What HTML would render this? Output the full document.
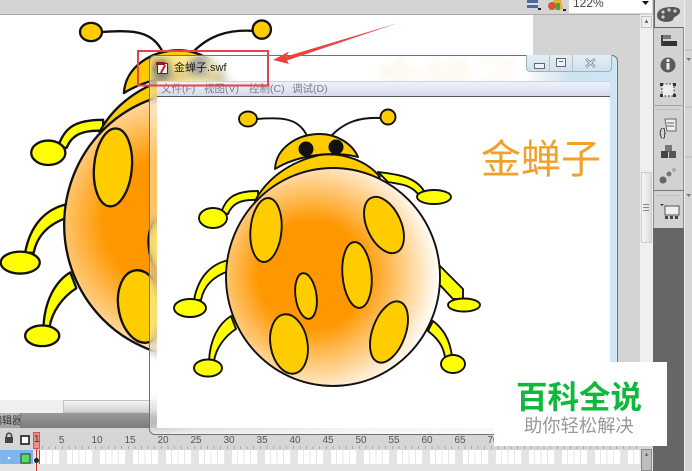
<!DOCTYPE html>
<html><head><meta charset="utf-8">
<style>
html,body{margin:0;padding:0;width:692px;height:471px;overflow:hidden;background:#d4d4d4;font-family:"Liberation Sans","Noto Sans CJK SC",sans-serif}
.a{position:absolute}
#stage{left:0;top:15px;width:533px;height:385px;background:#fff;overflow:hidden}
#win{left:149px;top:55px;width:467px;height:378px;border:1px solid #66757c;border-radius:6px;-webkit-backdrop-filter:blur(4px);backdrop-filter:blur(4px);background:linear-gradient(90deg,rgba(255,255,255,.4) 0,rgba(255,255,255,.62) 10%,rgba(255,255,255,.82) 40%,rgba(255,255,255,.9) 70%,rgba(255,255,255,.9) 80%,rgba(205,230,245,.8) 90%,rgba(205,230,245,.95) 100%);box-shadow:0 0 1px #fff inset}
#menu{left:157px;top:81px;width:453px;height:16px;background:linear-gradient(#f0f1fa,#d3d8eb);border-top:1px solid #c8d4e0;box-sizing:border-box}
#menu:after{content:"";position:absolute;left:0;right:0;bottom:0;height:1px;background:#555}
#menu span{position:absolute;top:0;font-size:10.5px;color:#7d7d85;line-height:14px;white-space:nowrap}
#client{left:157px;top:97px;width:453px;height:331px;background:#fff}
#btns{left:526px;top:55px;width:84px;height:16px;border:1px solid #9db2bf;border-top:0;border-radius:0 0 4px 4px;background:linear-gradient(#e4eef5,#cfe1ec);box-sizing:content-box}
.n{position:absolute;top:435px;font-size:10px;line-height:12px;color:#555;transform:translateX(-50%)}
.soft{filter:blur(.35px)}
</style></head>
<body>
<svg width="0" height="0" style="position:absolute">
<defs>
<radialGradient id="g" gradientUnits="userSpaceOnUse" cx="312" cy="275" r="128">
<stop offset="0" stop-color="#ff9800"/><stop offset=".42" stop-color="#ff9800"/><stop offset="1" stop-color="#fff"/>
</radialGradient>
<g id="bug" stroke="#111" stroke-width="1.9" stroke-linejoin="round">
<g fill="none">
<path d="M257 119C282 117 299 118 307 136"/>
<path d="M380 118C360 117 345 122 332 135"/>
</g>
<ellipse cx="248" cy="119" rx="9" ry="7.5" fill="#ffcc00"/>
<circle cx="388" cy="117" r="7.5" fill="#ffcc00"/>
<g fill="#ffff00">
<path d="M221 213C226 198 234 191 258 191L258 200C240 199 232 204 228 214Z"/>
<ellipse cx="213" cy="218" rx="14" ry="10"/>
<path d="M194 300C198 278 210 264 229 260L229 271C214 276 204 285 201 300Z"/>
<ellipse cx="190" cy="308" rx="16" ry="9"/>
<path d="M209 361C210 340 218 324 231 316L236 329C225 336 216 348 214 361Z"/>
<ellipse cx="208" cy="368" rx="14" ry="8.5"/>
<path d="M378 172C395 174 415 176 424 191L418 194C410 184 398 184 388 182Z"/>
<ellipse cx="434" cy="197" rx="17" ry="7"/>
<path d="M438 264L463 289L463 299L453 299L439 284Z"/>
<ellipse cx="464" cy="305" rx="16" ry="6.5"/>
<path d="M433 321C442 328 450 338 452 357L445 357C443 345 437 338 428 331Z"/>
<ellipse cx="453" cy="364" rx="12" ry="9"/>
</g>
<path d="M275 169C276 148 297 134 320 134C336 134 352 143 358 157C330 150 296 156 275 169Z" fill="#ffcc00"/>
<path d="M255 201C266 180 288 162 320 155C345 152 368 162 380 177L340 190L270 205Z" fill="#ffcc00"/>
<ellipse cx="333" cy="277" rx="107" ry="109" fill="url(#g)"/>
<circle cx="306" cy="149" r="7.5" fill="#111" stroke="none"/>
<circle cx="336" cy="147" r="7.5" fill="#111" stroke="none"/>
<g fill="#ffcc00">
<ellipse cx="266" cy="230" rx="15.5" ry="32" transform="rotate(5 266 230)"/>
<ellipse cx="384" cy="225" rx="17" ry="30" transform="rotate(-25 384 225)"/>
<ellipse cx="357" cy="275" rx="14.5" ry="33" transform="rotate(-5 357 275)"/>
<ellipse cx="306" cy="296" rx="10.5" ry="23" transform="rotate(-8 306 296)"/>
<ellipse cx="289" cy="344" rx="18.5" ry="30" transform="rotate(-10 289 344)"/>
<ellipse cx="389" cy="332" rx="16.5" ry="32" transform="rotate(20 389 332)"/>
</g>
</g>
</defs>
</svg>

<!-- top bar -->
<div class="a" style="left:0;top:14px;width:640px;height:1px;background:#a9a9a9"></div>
<svg class="a soft" style="left:525px;top:0" width="45" height="14">
<rect x="2" y="0" width="11" height="8" fill="#4a6a9a"/><rect x="2" y="3" width="11" height="2" fill="#dde"/><rect x="13" y="8" width="3" height="2" fill="#222"/>
<path d="M24 10L29 0L36 0L38 9Z" fill="#e8b030"/><circle cx="27" cy="6" r="4" fill="#d05a30"/><rect x="31" y="3" width="4" height="7" fill="#5a9a40"/><rect x="38" y="9" width="3" height="2" fill="#222"/>
</svg>
<div class="a" style="left:569px;top:0;width:83px;height:13px;background:#fff;font-size:12px;line-height:6px;color:#444;text-indent:4px;overflow:hidden">122%</div>
<svg class="a" style="left:642px;top:1px" width="8" height="5"><path d="M0 0H7L3.5 4Z" fill="#111"/></svg>

<!-- stage -->
<div class="a" id="stage">
<svg class="soft" width="533" height="385" style="position:absolute;left:0;top:0">
<g transform="translate(-211.56,-128.18) scale(1.22)">
<use href="#bug"/>
<text x="481" y="173" font-size="40" fill="#f2a02c" font-family="'Liberation Sans','Noto Sans CJK SC',sans-serif">金蝉子</text>
</g>
</svg>
</div>

<!-- right gray / scroll -->
<div class="a" style="left:640px;top:15px;width:13px;height:398px;background:#efefef"></div>
<div class="a" style="left:641px;top:16px;width:11px;height:12px;background:#eee;border:1px solid #c4c4c4;box-sizing:border-box;color:#555;font-size:7px;line-height:10px;text-align:center">▴</div>
<div class="a" style="left:641px;top:172px;width:11px;height:71px;background:linear-gradient(90deg,#f6f6f6,#dcdcdc);border:1px solid #ccc;box-sizing:border-box"></div>
<div class="a" style="left:643px;top:204px;width:6px;height:7px;border-top:1px solid #888;border-bottom:1px solid #888;box-sizing:border-box"></div>
<div class="a" style="left:643px;top:207px;width:6px;height:1px;background:#888"></div>

<!-- dock -->
<div class="a" style="left:653px;top:0;width:31px;height:228px;background:#d2d2d2;border-left:1px solid #8c8c8c;border-right:1px solid #8c8c8c;box-sizing:border-box"></div>
<div class="a" style="left:653px;top:228px;width:31px;height:243px;background:#666"></div>
<div class="a" style="left:654px;top:-1px;width:31px;height:29px;background:#dcdcdc;border:1px solid #666;box-sizing:border-box"></div>
<div class="a" style="left:653px;top:105px;width:31px;height:1px;background:#a5a5a5"></div>
<div class="a" style="left:653px;top:190px;width:31px;height:1px;background:#777"></div>
<div class="a" style="left:657px;top:109px;width:23px;height:2px;border-top:1px dotted #aaa"></div>
<div class="a" style="left:657px;top:195px;width:23px;height:2px;border-top:1px dotted #aaa"></div>
<div class="a" style="left:684px;top:0;width:8px;height:471px;background:#d6d6d6;border-left:1px solid #efefef;box-sizing:border-box"></div>
<svg class="a soft" style="left:654px;top:0" width="38" height="228">
<!-- paint -->
<path d="M3 16C3 9 10 7 18 7C25 7 28 10 25 14C22 17 20 16 19 20C16 23 4 23 3 16Z" fill="#555"/>
<circle cx="9" cy="12" r="1.6" fill="#ccc"/><circle cx="15" cy="10" r="1.6" fill="#ccc"/><circle cx="9" cy="17" r="1.6" fill="#ccc"/><circle cx="21" cy="11" r="1.6" fill="#ccc"/>
<!-- align -->
<rect x="7" y="35" width="2" height="11" fill="#444"/><rect x="9" y="35" width="8" height="4" fill="#777"/><rect x="9" y="41" width="14" height="5" fill="#333"/>
<!-- info -->
<circle cx="14" cy="65" r="7.5" fill="#5c5c5c"/><rect x="12.5" y="63" width="3" height="6.5" fill="#eee"/><circle cx="14" cy="60.5" r="1.6" fill="#eee"/>
<!-- transform -->
<rect x="8" y="84" width="12" height="12" fill="#eee" stroke="#444" stroke-dasharray="2 1.5"/><rect x="6" y="83" width="3" height="3" fill="#333"/><rect x="19" y="83" width="3" height="3" fill="#333"/><rect x="6" y="94" width="3" height="3" fill="#333"/><rect x="19" y="94" width="3" height="3" fill="#333"/>
<!-- code -->
<path d="M11 119H22V131H13Z" fill="#eee" stroke="#666"/><path d="M13 123H20M13 126H20" stroke="#666"/>
<text x="5" y="136" font-size="11" fill="#333" font-family="'Liberation Sans',sans-serif">(}</text>
<!-- cubes -->
<rect x="11" y="145" width="7" height="7" fill="#777"/><rect x="7" y="151" width="7" height="7" fill="#444"/><rect x="15" y="151" width="7" height="7" fill="#555"/>
<!-- dots -->
<circle cx="9" cy="180" r="3.5" fill="#666"/><circle cx="15" cy="174" r="2.5" fill="#777"/><circle cx="20" cy="170" r="2" fill="#aaa"/>
<!-- movie -->
<path d="M6 204H10L8 206Z" fill="#333"/><rect x="11" y="206" width="14" height="9" fill="#eee" stroke="#555"/><rect x="11" y="216" width="3" height="3" fill="#444"/><rect x="16" y="216" width="3" height="3" fill="#444"/><rect x="21" y="216" width="3" height="3" fill="#444"/>
<!-- side -->
<path d="M32 58H37L35 61Z" fill="#777"/><path d="M32 194H37L35 197Z" fill="#777"/>
<path d="M31 50H38M31 107H38M31 157H38" stroke="#bbb"/>
</svg>

<!-- timeline -->
<div class="a" style="left:0;top:400px;width:149px;height:13px;background:#efefef"></div>
<div class="a" style="left:63px;top:400px;width:90px;height:13px;background:linear-gradient(#f3f3f3,#cfcfcf);border:1px solid #c4c4c4;box-sizing:border-box"></div>
<div class="a" style="left:0;top:413px;width:653px;height:15px;background:linear-gradient(#999,#7c7c7c)"></div>
<div class="a" style="left:0;top:413px;width:21px;height:15px;background:linear-gradient(#b5b5b5,#a2a2a2);border-right:1px solid #777;box-sizing:border-box;font-size:10px;line-height:17px;color:#333;overflow:hidden;white-space:nowrap;text-indent:-8px">编辑器</div>
<div class="a" style="left:0;top:428px;width:653px;height:22px;background:#d6d6d6"></div>
<div class="a" style="left:42px;top:446px;width:598px;height:3px;background:repeating-linear-gradient(90deg,#aaa 0,#aaa 1px,transparent 1px,transparent 6.6px)"></div>
<div class="a" style="left:0;top:450px;width:653px;height:21px;background:#e4e4e4"></div>
<div class="a" style="left:0;top:450px;width:33px;height:14px;background:#7db6ec"></div>
<div class="a" style="left:40px;top:450px;width:600px;height:14px;background:repeating-linear-gradient(90deg,transparent 0,transparent 20px,#e4e4e4 20px,#e4e4e4 27px,transparent 27px,transparent 33px),repeating-linear-gradient(90deg,#fff 0,#fff 5.6px,#e8e8e8 5.6px,#e8e8e8 6.6px)"></div>
<div class="a" style="left:33px;top:432px;width:7px;height:17px;background:#f28b8b;border:1px solid #d85050;box-sizing:border-box;font-size:10px;line-height:14px;color:#333;text-align:center;overflow:hidden">1</div>
<div class="a" style="left:34px;top:450px;width:6px;height:14px;background:#e0e0e0;border-right:1px solid #444;box-sizing:border-box;opacity:.8"></div>
<div class="a" style="left:36px;top:449px;width:1px;height:22px;background:#d83030"></div>
<div class="a" style="left:34px;top:458px;width:5px;height:5px;background:#222;border-radius:50%"></div>
<svg class="a" style="left:0;top:430px" width="33" height="34">
<rect x="5" y="7" width="8" height="6" fill="#444"/><path d="M6.5 7V5.5C6.5 2.5 11.5 2.5 11.5 5.5V7" fill="none" stroke="#444" stroke-width="1.5"/>
<rect x="21" y="6" width="8" height="8" fill="#fff" stroke="#111" stroke-width="1.5"/>
<circle cx="9" cy="28" r="1.3" fill="#fff"/>
<rect x="21" y="24" width="9" height="9" fill="#55e055" stroke="#333"/>
</svg>
<div class="n" style="left:61.5px">5</div><div class="n" style="left:97px">10</div><div class="n" style="left:130px">15</div><div class="n" style="left:163px">20</div><div class="n" style="left:196px">25</div><div class="n" style="left:229px">30</div><div class="n" style="left:262px">35</div><div class="n" style="left:295px">40</div><div class="n" style="left:328px">45</div><div class="n" style="left:361px">50</div><div class="n" style="left:394px">55</div><div class="n" style="left:427px">60</div><div class="n" style="left:460px">65</div><div class="n" style="left:493px">70</div>
<div class="a" style="left:641px;top:449px;width:11px;height:22px;background:#bdbdbd;border:1px solid #888;box-sizing:border-box;color:#666;font-size:7px;line-height:10px;text-align:center">▴</div>
<div class="a" style="left:640px;top:446px;width:13px;height:3px;background:#d6d6d6"></div>

<!-- window -->
<div class="a" id="win"></div>
<div class="a" style="left:157px;top:63px;width:11px;height:11px;background:#f7f7f7;border:1px solid #333;box-sizing:border-box;border-radius:1px"></div>
<div class="a" style="left:156px;top:62px;width:9px;height:3px;background:#a01818"></div>
<svg class="a" style="left:158px;top:64px" width="10" height="10"><path d="M7 1C6 4 4 6 3 9" stroke="#d02020" stroke-width="2" fill="none"/></svg>
<div class="a soft" style="left:174px;top:61px;font-size:11px;line-height:14px;color:#222;white-space:nowrap">金蝉子.swf</div>
<div class="a" id="btns">
<div class="a" style="left:22px;top:0;width:1px;height:16px;background:#b2c4cf"></div>
<div class="a" style="left:45px;top:0;width:1px;height:16px;background:#b2c4cf"></div>
<div class="a" style="left:7px;top:8px;width:9px;height:4px;border:1px solid #666;background:#eef3f7"></div>
<div class="a" style="left:29px;top:3px;width:8px;height:7px;border:1px solid #666;background:#eef3f7"></div>
<div class="a" style="left:32px;top:6px;width:4px;height:1px;background:#666"></div>
<svg class="a" style="left:58px;top:3px" width="11" height="10"><path d="M1 1L10 9M10 1L1 9" stroke="#77828a" stroke-width="2.6"/><path d="M1 1L10 9M10 1L1 9" stroke="#eef3f7" stroke-width="1"/></svg>
</div>
<div class="a soft" id="menu"><span style="left:4px">文件(F)</span><span style="left:47px">视图(V)</span><span style="left:92px">控制(C)</span><span style="left:135px">调试(D)</span></div>
<div class="a" id="client"></div>
<svg class="a soft" style="left:157px;top:97px" width="453" height="331">
<g transform="translate(-157,-97)"><use href="#bug"/>
<text x="481" y="173" font-size="40" fill="#f2a02c" font-family="'Liberation Sans','Noto Sans CJK SC',sans-serif">金蝉子</text></g>
</svg>

<!-- annotation -->
<svg class="a soft" style="left:0;top:0" width="692" height="471">
<rect x="138" y="51" width="130" height="34.5" fill="none" stroke="#e2454a" stroke-width="2"/>
<path d="M273 60L289 51.5L286 56.5L398 23L287 60.5L289 64Z" fill="#e8453f"/>
</svg>

<!-- watermark -->
<div class="a" style="left:494px;top:362px;width:173px;height:84px;background:#fff"></div>
<div class="a" style="left:516px;top:378px;font-size:31.5px;line-height:38px;font-weight:700;color:#12b83e;white-space:nowrap;font-family:'Liberation Sans','Noto Sans CJK SC',sans-serif">百科全说</div>
<div class="a" style="left:524px;top:414px;font-size:18.3px;line-height:24px;color:#999;white-space:nowrap">助你轻松解决</div>
</body></html>
